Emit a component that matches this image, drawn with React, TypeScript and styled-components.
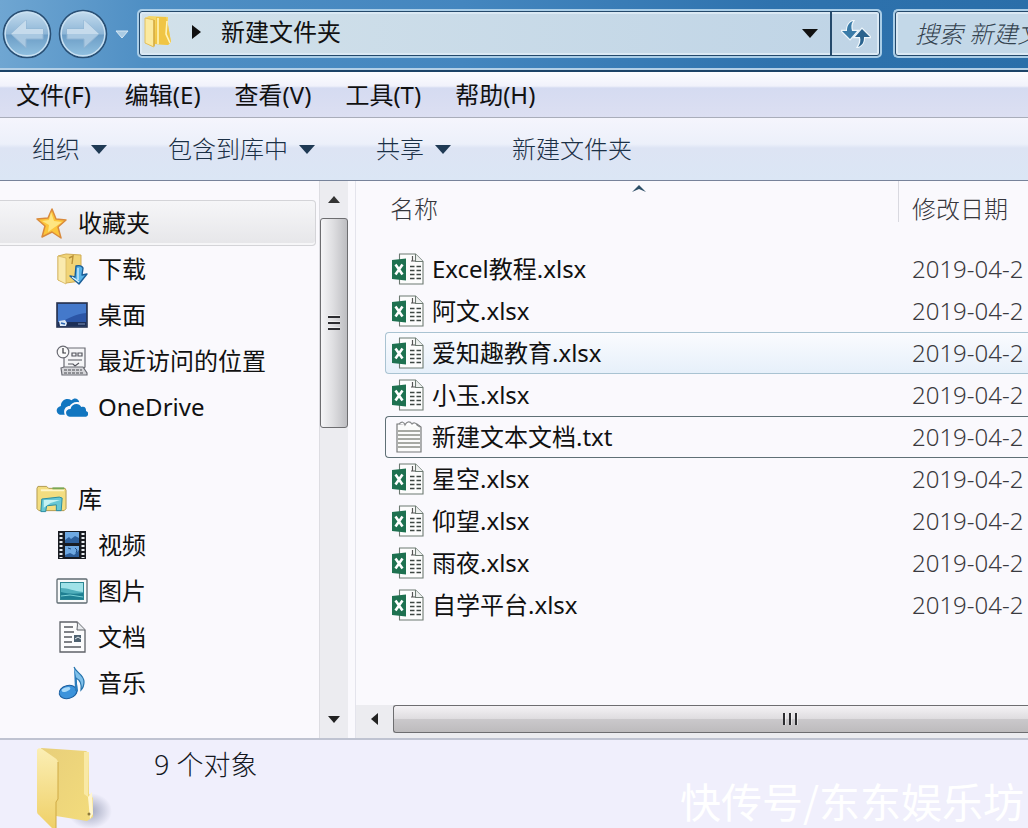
import React from "react";
import styled, { createGlobalStyle, css } from "styled-components";

const GlobalStyle = createGlobalStyle`
  * { box-sizing: border-box; }
  body {
    margin: 0;
    overflow-x: hidden;
    background: #f0effb;
    color: #111;
    font: 24px/32px "Noto Sans", "Noto Sans CJK SC", sans-serif;
  }
  button, input { font: inherit; color: inherit; }
  svg { display: block; flex: none; }
`;

const Window = styled.div`
  min-height: 100vh;
  display: flex;
  flex-direction: column;
  overflow: hidden;
`;

const PlainButton = styled.button`
  border: 0;
  padding: 0;
  background: none;
  display: flex;
  align-items: center;
  justify-content: center;
  white-space: nowrap;
`;

/* Title strip: history buttons, address and search */
const TitleBar = styled.header`
  height: 72px;
  display: flex;
  align-items: flex-start;
  padding: 9px 0 0 3px;
  background: linear-gradient(90deg, #6fa6d2 0%, #4f8fc4 14%, #4486bf 45%, #2f73ae 75%, #2a6ea9 100%);
  border-bottom: 2px solid #1d4468;
  box-shadow: inset 0 -2px #b3cfe6;
`;

const History = styled.nav`
  width: 134px;
  display: flex;
  align-items: center;
  gap: 8px;
`;

const RoundButton = styled(PlainButton)`
  width: 48px;
  height: 50px;
  flex: none;
`;

const FieldFrame = css`
  height: 49px;
  border: 2px solid #a9cde7;
  border-radius: 5px;
  background: #c3d8e8;
  box-shadow: inset 0 0 0 1px #24496b, inset 0 0 0 3px #dbe9f4;
`;

const Address = styled.div`
  ${FieldFrame}
  flex: 1;
  min-width: 0;
  display: flex;
  align-items: stretch;
  padding: 1px;
  background: linear-gradient(90deg, #d2e1ea, #bfd4e6);
`;

const Crumb = styled(PlainButton)`
  gap: 20px;
  padding-left: 4px;
  margin-right: auto;
  padding-bottom: 4px;
`;

const AddressButton = styled(PlainButton)<{ $divided?: boolean }>`
  width: ${(p) => (p.$divided ? 49 : 40)}px;
  border-left: ${(p) => (p.$divided ? "2px solid #24496b" : "0")};
`;

const Search = styled.label`
  ${FieldFrame}
  flex: 0 0 139px;
  margin: 0 -4px 0 11px;
  border-right: 0;
  border-radius: 5px 0 0 5px;
  display: flex;
  overflow: hidden;
`;

const SearchInput = styled.input`
  width: 100%;
  min-width: 0;
  border: 0;
  outline: 0;
  padding: 0 0 0 20px;
  background: none;
  font-style: italic;
  font-weight: 300;
  &::placeholder { color: #33424f; opacity: 1; }
`;

const MenuBar = styled.nav`
  height: 46px;
  display: flex;
  align-items: center;
  gap: 34px;
  padding: 0 16px;
  background: linear-gradient(#fdfdff 0, #f1f2fb 14px, #d5dbf1 16px, #dcdff2 100%);
  border-bottom: 1px solid #a9adba;
`;

const ToolBar = styled.div`
  height: 63px;
  display: flex;
  align-items: center;
  gap: 61px;
  padding: 0 32px;
  color: #1b3046;
  font-weight: 300;
  background: linear-gradient(#f5f5fd 0, #ecf0fa 26px, #dde4f4 30px, #dbe6f5 100%);
  border-bottom: 1px solid #77839a;
`;

const ToolButton = styled(PlainButton)`
  gap: 11px;
`;

const Main = styled.main`
  flex: 1;
  display: flex;
  min-height: 0;
  background: #faf9fd;
  border-bottom: 2px solid #bfc3d1;
`;

/* Left navigation tree */
const Sidebar = styled.aside`
  width: 319px;
  flex: none;
  padding: 19px 3px 32px 0;
`;

const TreeRow = styled.a<{ $level?: number; $active?: boolean; $spaced?: boolean }>`
  height: 46px;
  margin-top: ${(p) => (p.$spaced ? 46 : 0)}px;
  display: flex;
  align-items: center;
  gap: ${(p) => (p.$level ? 10 : 11)}px;
  padding-left: ${(p) => (p.$level ? 56 : 36)}px;
  color: #111;
  text-decoration: none;
  border: 1px solid transparent;
  border-left: 0;
  ${(p) =>
    p.$active &&
    css`
      border-color: #d4d4d8;
      border-radius: 0 4px 4px 0;
      background: linear-gradient(#f6f6f8, #e6e6e9);
      box-shadow: inset 0 -2px #f6f6f8;
    `}
`;

/* Scroll bars */
const VerticalBar = styled.div`
  width: 29px;
  flex: none;
  display: flex;
  flex-direction: column;
  background: #ececf0;
  border-left: 1px solid #dddde2;
`;

const VerticalThumb = styled.div`
  height: 210px;
  margin-bottom: auto;
  border: 1px solid #6d6d70;
  border-radius: 3px;
  background: linear-gradient(90deg, #f5f5f7, #dcdcdf 50%, #bdbdc1);
  display: flex;
  align-items: center;
  justify-content: center;
`;

const HorizontalBar = styled.div`
  height: 33px;
  flex: none;
  display: flex;
  padding-bottom: 5px;
  background: #ececf0;
`;

const HorizontalThumb = styled.div`
  flex: 1;
  border: 1px solid #6d6d70;
  border-right: 0;
  border-radius: 3px 0 0 3px;
  background: linear-gradient(#f4f2f5 0, #dfdde0 48%, #cac8cb 52%, #bdbbbd 100%);
  display: flex;
  align-items: center;
  justify-content: center;
  padding-left: 158px;
`;

const ScrollButton = styled(PlainButton)`
  width: 37px;
  flex: none;
`;

const StepButton = styled(PlainButton)`
  height: 37px;
  flex: none;
`;

/* File list */
const FilePane = styled.section`
  flex: 1;
  min-width: 0;
  margin-left: 7px;
  border-left: 1px solid #e4e4ec;
  display: flex;
  flex-direction: column;
`;

const TableArea = styled.div`
  flex: 1;
  padding-left: 29px;
  overflow: hidden;
`;

const FileTable = styled.table`
  width: 100%;
  table-layout: fixed;
  border-collapse: separate;
  border-spacing: 0;
`;

const HeadCell = styled.th<{ $date?: boolean }>`
  position: relative;
  width: ${(p) => (p.$date ? "130px" : "auto")};
  height: 67px;
  padding: 0 0 26px;
  font-weight: 300;
  text-align: left;
  color: #36363c;
  vertical-align: top;
  white-space: nowrap;
`;

const HeadLabel = styled.div<{ $date?: boolean }>`
  height: 41px;
  padding: 12px 0 0 ${(p) => (p.$date ? 13 : 5)}px;
  border-left: ${(p) => (p.$date ? "1px solid #d9d9e0" : "0")};
`;

const SortMark = styled.span`
  position: absolute;
  top: 4px;
  left: calc(50% - 10px);
`;

type RowState = "plain" | "hover" | "focus";
const edge = { plain: "transparent", hover: "#a9c3d2", focus: "#5f7076" };

const Cell = styled.td<{ $state: RowState; $date?: boolean }>`
  height: 42px;
  padding: 0 0 0 ${(p) => (p.$date ? 14 : 6)}px;
  white-space: nowrap;
  overflow: hidden;
  color: ${(p) => (p.$date ? "#3a3a40" : "#111")};
  font-weight: ${(p) => (p.$date ? 300 : 400)};
  border: 1px solid ${(p) => edge[p.$state]};
  border-right: 0;
  ${(p) =>
    p.$date
      ? css`
          border-left: 0;
        `
      : css`
          border-radius: 4px 0 0 4px;
        `}
  ${(p) =>
    p.$state === "hover" &&
    css`
      background: linear-gradient(#fafbfe, #e6f0fa);
    `}
`;

const FileName = styled.span`
  display: flex;
  align-items: center;
  gap: 8px;
`;

const StatusBar = styled.footer`
  height: 90px;
  flex: none;
  display: flex;
  align-items: flex-start;
  padding: 7px 4px 0 34px;
  background: #f0effc;
  color: #15181f;
  font-size: 27px;
  font-weight: 300;
  line-height: 36px;
`;

const StatusText = styled.p`
  margin: 0 auto 0 40px;
`;

const Watermark = styled.p`
  margin: 0;
  padding-top: 23px;
  font: 400 41px/60px "Noto Sans CJK SC", sans-serif;
  color: #fff;
  white-space: nowrap;
`;

/* Drawings */
const NavArrow = ({ flip, id }: { flip?: boolean; id: string }) => (
  <svg width="50" height="50" viewBox="0 0 50 50" aria-hidden="true">
    <defs>
      <linearGradient id={id} x1="0" y1="0" x2="0" y2="1">
        <stop offset="0" stopColor="#c5ddef" />
        <stop offset=".5" stopColor="#8db5d6" />
        <stop offset=".52" stopColor="#6c9dc6" />
        <stop offset="1" stopColor="#93c3e2" />
      </linearGradient>
    </defs>
    <circle cx="25" cy="25" r="23.5" fill={`url(#${id})`} stroke="#294f74" strokeWidth="1.6" />
    <circle cx="25" cy="25" r="21.8" fill="none" stroke="#c9e0f1" strokeWidth="1.4" />
    <g transform={flip ? "translate(50 0) scale(-1 1)" : undefined}>
      <path d="M9 25 24 11v9h17v10H24v9z" fill="#a9c8e1" stroke="#8fb4d3" />
      <path d="M9 25 24 11v9h17v5z" fill="#c6dbec" />
    </g>
  </svg>
);

const Triangle = ({ d, w, h, fill = "#111", stroke }: { d: string; w: number; h: number; fill?: string; stroke?: string }) => (
  <svg width={w} height={h} viewBox={`0 0 ${w} ${h}`} aria-hidden="true">
    <path d={d} fill={fill} stroke={stroke} />
  </svg>
);

const Caret = () => <Triangle w={16} h={9} d="M0 0h16L8 9z" fill="#1f3a54" />;

const CrumbFolder = () => (
  <svg width="28" height="34" viewBox="0 0 28 34" aria-hidden="true">
    <path d="M1 3 5 1l19 1v8l3 17-3 3-13-1-2 3-8-4z" fill="#f5d667" />
    <path d="M12 2h10l2 8 3 17-3 3-13-1z" fill="#f0c544" />
    <path d="M1 3l9 2v27l-9-4z" fill="#fbeaa0" stroke="#e0b64a" strokeWidth=".8" />
    <path d="M14 3v26M23 6l-1 13 4 9" stroke="#fff3b8" strokeWidth="1.6" fill="none" />
    <path d="M10 5v26" stroke="#c99a2c" strokeWidth="1" />
  </svg>
);

const Refresh = () => (
  <svg width="30" height="28" viewBox="0 0 30 28" aria-hidden="true">
    <g fill="#3a7ba8" stroke="#eef6fb" strokeWidth="2.4" paintOrder="stroke">
      <path d="M12 1C7 3 6 7 6 11H1l8 8 7-8h-5c-1-4-1-7 1-10z" />
      <path d="M17 27c5-2 6-5 6-10h6l-8-8-7 8h5c1 4 0 7-2 10z" fill="#2a638e" />
    </g>
  </svg>
);

const Star = () => (
  <svg width="31" height="31" viewBox="0 0 31 31" aria-hidden="true">
    <path d="M16 1l4 10 10 1-8 7 3 11-9-6-10 5 3-11-8-7 11-1z" fill="#fcc53a" stroke="#d98a3c" strokeWidth="1.5" strokeLinejoin="round" />
    <path d="M15 4l3 9 8 1-7 5-7 5 1-7-7-4 7-1z" fill="#fff09a" opacity=".75" />
  </svg>
);

const Download = () => (
  <svg width="32" height="32" viewBox="0 0 32 32" aria-hidden="true">
    <path d="M2 3 10 1l15 1v26l-15 2-8-3z" fill="#f1d477" stroke="#d0ad56" />
    <path d="M2 3l8 2v26l-8-4z" fill="#faeaae" stroke="#d7b862" strokeWidth=".8" />
    <path d="M13 5l4-2-1 8" fill="none" stroke="#b9913a" strokeWidth="1.4" />
    <path d="M20 13c4-1 6 0 7 2l-1 7 5-1-8 10-9-8 5 1z" fill="#55b2e8" stroke="#1b5e97" strokeWidth="1.4" strokeLinejoin="round" />
    <path d="M22 15v12M16 24l7 5" stroke="#d9f2ff" strokeWidth="1.3" />
  </svg>
);

const Desktop = () => (
  <svg width="32" height="26" viewBox="0 0 32 26" aria-hidden="true">
    <rect x="1" y="1" width="30" height="24" fill="#2b55a6" stroke="#28344f" strokeWidth="1.6" />
    <path d="M2 2h28v9C20 12 12 16 6 20H2z" fill="#4479cb" />
    <path d="M2 20h28v4H2z" fill="#1c2f57" />
    <path d="M3 19l6-1 2 3-1 3H4z" fill="#dbe9f6" />
    <path d="M5 21l4 1" stroke="#2d66b1" strokeWidth="1.5" />
    <path d="M22 22h7" stroke="#7f93bb" />
  </svg>
);

const Recent = () => (
  <svg width="32" height="32" viewBox="0 0 32 32" fill="none" stroke="#6b6c74" strokeWidth="1.2" aria-hidden="true">
    <path d="M10 3h19v19l-2 2H8V12" fill="#f5f5f7" />
    <circle cx="7" cy="7" r="5.8" fill="#fafafa" />
    <path d="M7 3v5h3" stroke="#34353b" />
    <path d="M16 8h4v3h-4zM22 8h4v3h-4zM12 15h14M12 19h5l2 2 4-3" stroke="#55565e" />
    <path d="M5 23l3-1h19l4 6v2H6z" fill="#d5d5d9" />
    <path d="M8 25h18M8 28h20" strokeDasharray="3 1" stroke="#4b4c53" />
  </svg>
);

const OneDrive = () => (
  <svg width="32" height="21" viewBox="0 0 33 21" fill="#1276c0" aria-hidden="true">
    <path d="M9 18H4c-5-2-4-8 1-9 0-6 6-9 11-6 3-3 7-2 8 2-5-1-8 1-10 4-4 0-7 4-5 9z" />
    <path d="M14 20c-5-1-5-8 1-8 1-6 9-7 11-2 4-1 5 1 5 4 3 1 3 5 0 6z" />
  </svg>
);

const Library = () => (
  <svg width="31" height="28" viewBox="0 0 32 28" aria-hidden="true">
    <path d="M1 3l1-2h9l2 2h17l1 2v19l-2 2H3l-2-2z" fill="#f3dd80" stroke="#b29a4f" />
    <path d="M5 5h24" stroke="#fff7c9" strokeWidth="2" />
    <path d="M17 2h12v2H17z" fill="#79a855" />
    <path d="M6 14l18-2 3 1-1 13h-5v-6l-10 1-1 6H5z" fill="#67c7d5" stroke="#278ba0" />
    <path d="M8 15h17l-10 3-7 5z" fill="#c4f2f3" />
  </svg>
);

const Video = () => (
  <svg width="32" height="30" viewBox="0 0 32 30" aria-hidden="true">
    <rect x="2" y="1" width="28" height="28" fill="#191c22" />
    <path d="M5 3v25M27 3v25" stroke="#e8edf2" strokeWidth="3" strokeDasharray="2 2" />
    <path d="M9 2h14v11H9zM9 16h14v11H9z" fill="#6fa9e2" />
    <path d="M9 10l4-3 2 2 4-3 4 2v5H9zM9 25l5-2 4 2 5-5v7H9z" fill="#2d5f9b" />
    <path d="M12 18l3 1M19 18l2 2-1 3" stroke="#1f4a80" fill="none" />
  </svg>
);

const Picture = () => (
  <svg width="32" height="26" viewBox="0 0 32 26" aria-hidden="true">
    <rect x="1" y="1" width="30" height="24" rx="1" fill="#f8fafa" stroke="#5f6b72" strokeWidth="1.3" />
    <rect x="4.5" y="4.5" width="23" height="17" fill="#9fe2e8" stroke="#2c8794" />
    <path d="M5 10c8 0 12 3 22 4v3H5z" fill="#4faebb" />
    <path d="M5 14c7 2 14 2 22 1v6H5z" fill="#1f7f92" />
    <path d="M5 18l9-1 13 2" stroke="#7ad1d6" fill="none" />
  </svg>
);

const Document = () => (
  <svg width="32" height="32" viewBox="0 0 32 32" aria-hidden="true">
    <path d="M4 1h17l8 8v22H4z" fill="#fcfcfd" stroke="#5f6268" strokeWidth="1.3" />
    <path d="M21 1c1 3 0 5 0 8h8" fill="#e9ebee" stroke="#5f6268" />
    <path d="M8 6h9M8 11h10M8 16h8M8 21h8M8 26h17" stroke="#55585f" strokeWidth="1.3" />
    <path d="M18 14h7v7h-7z" fill="#4e6170" />
    <path d="M19 18l3-2 3 2" stroke="#dfe8ee" fill="none" />
  </svg>
);

const Music = () => (
  <svg width="32" height="34" viewBox="0 0 32 34" aria-hidden="true">
    <path d="M18 1c2 6 10 7 10 15 0 4-1 6-3 8 1-7-1-10-5-12l1 14" fill="#7fc0ea" stroke="#2673ac" strokeWidth="1.2" />
    <ellipse cx="12" cy="26" rx="9" ry="6.5" transform="rotate(-14 12 26)" fill="#3c93db" stroke="#1c5e9e" />
    <ellipse cx="10" cy="23.5" rx="4.5" ry="2" transform="rotate(-18 10 23.5)" fill="#a8dafa" />
    <path d="M18 1l1 24h3l-2-14z" fill="#2b7cbd" />
  </svg>
);

const ExcelFile = () => (
  <svg width="32" height="32" viewBox="0 0 32 32" aria-hidden="true">
    <path d="M7.5 1h16L31 8.500V31H7.500z" fill="#fdfdfd" stroke="#6d7a72" strokeWidth="1.1" />
    <path d="M23.5 1v7.500H31" fill="#eef0ef" stroke="#6d7a72" strokeWidth="1.1" />
    <path d="M19 8h4M20.500 3v5" stroke="#555" strokeWidth="1.2" />
    <path d="M18 13.500h4.500m2 0H29M18 17.500h4.500m2 0H29M18 21.500h4.500m2 0H29M18 25.500h4.500m2 0H29" stroke="#3f4743" strokeWidth="1.5" />
    <path d="M0 7l14-1.500v22L0 26z" fill="#1e7150" />
    <path d="M3.500 11.500l7 10M10.500 11.500l-7 10" stroke="#fff" strokeWidth="2.6" />
  </svg>
);

const TextFile = () => (
  <svg width="32" height="32" viewBox="0 0 32 32" aria-hidden="true">
    <path d="M5 3h20l4 3v25H5z" fill="#fbfbfa" stroke="#77797a" strokeWidth="1.2" />
    <path d="M7 3c3-3 5-2 6 1 2-4 5-4 7-1 2-2 4-1 5 1l3 2" fill="#fff" stroke="#8a8c8d" strokeWidth="1.2" />
    <path d="M6 10h22M6 14h22M6 18h22M6 22h22M6 26h22" stroke="#8c8f86" strokeWidth="1.3" />
  </svg>
);

const BigFolder = () => (
  <svg width="80" height="82" viewBox="0 0 80 82" aria-hidden="true">
    <defs>
      <linearGradient id="back" x1="0" y1="0" x2="1" y2="1">
        <stop offset="0" stopColor="#e8cf7a" />
        <stop offset="1" stopColor="#f3dc7c" />
      </linearGradient>
      <linearGradient id="front" x1="0" y1="0" x2="0" y2="1">
        <stop offset="0" stopColor="#fbeeb4" />
        <stop offset="1" stopColor="#efd067" />
      </linearGradient>
      <radialGradient id="shade">
        <stop offset="0" stopColor="#8c93ad" stopOpacity=".8" />
        <stop offset="1" stopColor="#8c93ad" stopOpacity="0" />
      </radialGradient>
    </defs>
    <ellipse cx="56" cy="64" rx="22" ry="18" fill="url(#shade)" />
    <path d="M7 1l45 3 3 2v41l4 4v19l-6 4-31-5z" fill="url(#back)" />
    <path d="M50 5v42l4 3 1-45z" fill="#f9e9a5" />
    <path d="M54 50l4-5 1 22-3 5z" fill="#fff6cf" />
    <path d="M3 3c1-2 3-2 5-1l13 9c2 1 3 3 3 5v36l-2 3v27h-3L5 68c-2-1-2-3-2-5z" fill="url(#front)" />
    <path d="M24 15v37l-2 3v27" fill="none" stroke="#cfaa45" />
    <circle cx="55" cy="67" r="1.5" fill="#8d7a3c" />
  </svg>
);

const Grip = ({ vertical }: { vertical?: boolean }) => (
  <svg width="16" height="16" viewBox="0 0 16 16" aria-hidden="true">
    <g transform={vertical ? "rotate(-90 8 8)" : undefined}>
      <path d="M3 2v12M9 2v12M15 2v12" stroke="#fff" />
      <path d="M2 2v12M8 2v12M14 2v12" stroke="#2c2c30" strokeWidth="2" />
    </g>
  </svg>
);

const menus = ["文件(F)", "编辑(E)", "查看(V)", "工具(T)", "帮助(H)"];

const tools = [
  { label: "组织", caret: true },
  { label: "包含到库中", caret: true },
  { label: "共享", caret: true },
  { label: "新建文件夹", caret: false },
];

const tree = [
  { label: "收藏夹", icon: Star, level: 0, active: true },
  { label: "下载", icon: Download, level: 1 },
  { label: "桌面", icon: Desktop, level: 1 },
  { label: "最近访问的位置", icon: Recent, level: 1 },
  { label: "OneDrive", icon: OneDrive, level: 1 },
  { label: "库", icon: Library, level: 0, spaced: true },
  { label: "视频", icon: Video, level: 1 },
  { label: "图片", icon: Picture, level: 1 },
  { label: "文档", icon: Document, level: 1 },
  { label: "音乐", icon: Music, level: 1 },
];

const files: { name: string; state?: RowState }[] = [
  { name: "Excel教程.xlsx" },
  { name: "阿文.xlsx" },
  { name: "爱知趣教育.xlsx", state: "hover" },
  { name: "小玉.xlsx" },
  { name: "新建文本文档.txt", state: "focus" },
  { name: "星空.xlsx" },
  { name: "仰望.xlsx" },
  { name: "雨夜.xlsx" },
  { name: "自学平台.xlsx" },
];

export default function App() {
  return (
    <Window>
      <GlobalStyle />
      <TitleBar>
        <History aria-label="历史">
          <RoundButton aria-label="后退"><NavArrow id="navBack" /></RoundButton>
          <RoundButton aria-label="前进"><NavArrow id="navForward" flip /></RoundButton>
          <PlainButton aria-label="最近的页面">
            <Triangle w={14} h={9} d="M1 1h12L7 8z" fill="#a9cbe4" stroke="#d6e7f3" />
          </PlainButton>
        </History>
        <Address>
          <Crumb>
            <CrumbFolder />
            <Triangle w={9} h={14} d="M0 0l9 7-9 7z" />
            新建文件夹
          </Crumb>
          <AddressButton aria-label="以前的位置"><Triangle w={16} h={9} d="M0 0h16L8 9z" /></AddressButton>
          <AddressButton aria-label="刷新" $divided><Refresh /></AddressButton>
        </Address>
        <Search>
          <SearchInput type="text" aria-label="搜索" placeholder="搜索 新建文件夹" />
        </Search>
      </TitleBar>

      <MenuBar aria-label="菜单">
        {menus.map((m) => <PlainButton key={m}>{m}</PlainButton>)}
      </MenuBar>

      <ToolBar>
        {tools.map((t) => (
          <ToolButton key={t.label}>
            {t.label}
            {t.caret && <Caret />}
          </ToolButton>
        ))}
      </ToolBar>

      <Main>
        <Sidebar>
          {tree.map(({ label, icon: Icon, level, active, spaced }) => (
            <TreeRow key={label} href="#" $level={level} $active={active} $spaced={spaced}>
              <Icon />
              {label}
            </TreeRow>
          ))}
        </Sidebar>
        <VerticalBar>
          <StepButton aria-label="向上滚动"><Triangle w={12} h={7} d="M6 0l6 7H0z" fill="#333" /></StepButton>
          <VerticalThumb><Grip vertical /></VerticalThumb>
          <StepButton aria-label="向下滚动"><Triangle w={12} h={7} d="M0 0h12L6 7z" fill="#222" /></StepButton>
        </VerticalBar>
        <FilePane>
          <TableArea>
            <FileTable>
              <thead>
                <tr>
                  <HeadCell scope="col">
                    <HeadLabel>名称</HeadLabel>
                    <SortMark><Triangle w={14} h={7} d="M7 0l7 7-7-3-7 3z" fill="#2f5068" /></SortMark>
                  </HeadCell>
                  <HeadCell scope="col" $date>
                    <HeadLabel $date>修改日期</HeadLabel>
                  </HeadCell>
                </tr>
              </thead>
              <tbody>
                {files.map(({ name, state = "plain" }) => (
                  <tr key={name}>
                    <Cell $state={state}>
                      <FileName>
                        {name.endsWith(".txt") ? <TextFile /> : <ExcelFile />}
                        {name}
                      </FileName>
                    </Cell>
                    <Cell $state={state} $date>2019-04-2</Cell>
                  </tr>
                ))}
              </tbody>
            </FileTable>
          </TableArea>
          <HorizontalBar>
            <ScrollButton aria-label="向左滚动"><Triangle w={7} h={12} d="M7 0v12L0 6z" fill="#222" /></ScrollButton>
            <HorizontalThumb><Grip /></HorizontalThumb>
          </HorizontalBar>
        </FilePane>
      </Main>

      <StatusBar>
        <BigFolder />
        <StatusText>9 个对象</StatusText>
        <Watermark>快传号/东东娱乐坊</Watermark>
      </StatusBar>
    </Window>
  );
}
